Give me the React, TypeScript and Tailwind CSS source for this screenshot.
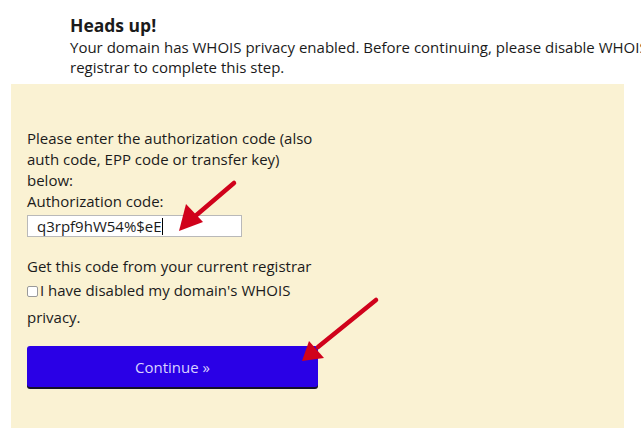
import React from "react";

export default function App() {
  return (
    <div
      className="relative w-[641px] h-[439px] overflow-hidden bg-white text-[#1b1b1b]"
      style={{ fontFamily: '"Open Sans", "Liberation Sans", sans-serif' }}
    >
      <div className="pl-[70px] pt-[14px] h-[84px]">
        <div className="text-[17.5px] font-bold leading-[23px]">Heads up!</div>
        <div className="text-[15px] leading-[20px] whitespace-nowrap">
          Your domain has WHOIS privacy enabled. Before continuing, please disable WHOIS privacy at your current
          <br />
          registrar to complete this step.
        </div>
      </div>
      <div className="ml-[11px] w-[613px] h-[344px] bg-[#faf2d3] pl-[16px] pt-[44px]">
        <div className="w-[290px] text-[15px] leading-[21px]">
          <p>Please enter the authorization code (also auth code, EPP code or transfer key) below:</p>
          <p>Authorization code:</p>
          <div className="mt-[3px] w-[215px] h-[22px] border border-[#b9b9b9] bg-white pl-[9px] flex items-center text-[15px] leading-[20px]">
            <span>q3rpf9hW54%$eE</span>
            <span className="w-px h-[17px] bg-black" />
          </div>
          <p className="mt-[19px]">Get this code from your current registrar</p>
          <label className="block leading-[27px]">
            <span className="inline-block align-[-1px] w-[11px] h-[11px] border border-[#9a9a9a] rounded-[2px] bg-white mr-[2px]" />
            I have disabled my domain's WHOIS privacy.
          </label>
          <button className="mt-[15px] w-[291px] h-[41px] pt-[2px] rounded-[3px] bg-[#2a00e6] text-[#d9d2ff] text-[15px] shadow-[0_2px_0_#14102a]">
            Continue »
          </button>
        </div>
      </div>
      <svg className="absolute left-0 top-0 pointer-events-none" width="641" height="439">
        <line x1="234" y1="183" x2="193" y2="218" stroke="#d0021b" strokeWidth="4.5" strokeLinecap="round" />
        <polygon points="179,231 186,204 203,222" fill="#d0021b" />
        <line x1="376" y1="300" x2="318" y2="347" stroke="#d0021b" strokeWidth="4.5" strokeLinecap="round" />
        <polygon points="302,361 309,341 324,358" fill="#d0021b" />
      </svg>
    </div>
  );
}
